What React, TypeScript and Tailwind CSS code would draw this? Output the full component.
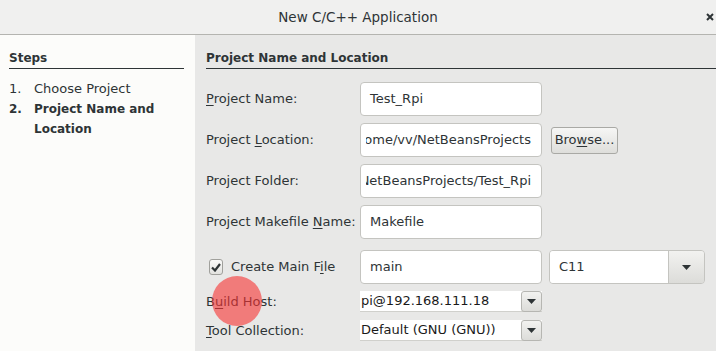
import React from "react";

const font = { fontFamily: "'DejaVu Sans', 'Liberation Sans', sans-serif" };

function U({ children }: { children: React.ReactNode }) {
  return <span className="underline underline-offset-2 decoration-1">{children}</span>;
}

function Caret() {
  return (
    <svg width="9" height="5" viewBox="0 0 9 5">
      <path d="M0 0 L9 0 L4.5 5 Z" fill="#2e3436" />
    </svg>
  );
}

function TextField({ value, right }: { value: string; right?: boolean }) {
  return (
    <div className="w-[182px] h-[34px] bg-white border border-[#c4c4c0] rounded-[4px] flex items-center overflow-hidden whitespace-nowrap text-[13px] text-[#2e3436]">
      {right ? (
        <div className="ml-[5px] mr-[10px] flex-1 flex justify-end overflow-hidden">{value}</div>
      ) : (
        <div className="pl-[9px]">{value}</div>
      )}
    </div>
  );
}

function SmallCombo({ value }: { value: string }) {
  return (
    <div className="w-[182px] h-[21px] flex bg-white border-b border-[#d0d0cc] text-[13px] text-[#1a1a1a]">
      <div className="flex-1 flex items-center pl-[1px] overflow-hidden whitespace-nowrap">{value}</div>
      <div className="w-[21px] h-[21px] flex items-center justify-center border border-[#b6b6b2] rounded-[3px] bg-gradient-to-b from-[#f2f2f0] to-[#dcdcd9]">
        <Caret />
      </div>
    </div>
  );
}

function Row({ label, children }: { label: React.ReactNode; children: React.ReactNode }) {
  return (
    <div className="flex items-center">
      <div className="w-[154px] text-[13px] text-[#2e3436] whitespace-nowrap">{label}</div>
      {children}
    </div>
  );
}

export default function App() {
  return (
    <div className="w-[716px] h-[351px] overflow-hidden flex flex-col bg-[#e8e8e7] relative" style={font}>
      {/* title bar */}
      <div className="h-[35px] shrink-0 bg-[#f0f0ef] border-b border-[#b4b4b0] flex items-center justify-center relative">
        <span className="text-[13.5px] text-[#2e3436]">New C/C++ Application</span>
        <svg className="absolute right-[2px] top-[13px]" width="8" height="8" viewBox="0 0 8 8">
          <path d="M1 1 L7 7 M7 1 L1 7" stroke="#2e3436" strokeWidth="2" />
        </svg>
      </div>

      <div className="flex flex-1 min-h-0">
        {/* steps */}
        <div className="w-[195px] shrink-0 bg-[#fcfcfa] px-[9px] pr-[11px]">
          <div className="pt-[15px] pb-[1px] border-b border-[#2e3436] text-[12px] font-bold leading-[17px] text-[#2e3436]">
            Steps
          </div>
          <div className="mt-[10px] text-[13px] leading-[20px] text-[#2e3436]">
            <div className="flex">
              <span className="w-[25px]">1.</span>
              <span>Choose Project</span>
            </div>
            <div className="flex font-bold text-[12px]">
              <span className="w-[25px] shrink-0">2.</span>
              <span>
                Project Name and
                <br />
                Location
              </span>
            </div>
          </div>
        </div>

        {/* form */}
        <div className="flex-1 pl-[11px]">
          <div className="pt-[15px] pb-[1px] border-b border-[#2e3436] text-[12px] font-bold leading-[17px] text-[#2e3436]">
            Project Name and Location
          </div>

          <div className="mt-[13px] flex flex-col gap-[7px]">
            <Row label={<><U>P</U>roject Name:</>}>
              <TextField value="Test_Rpi" />
            </Row>
            <Row label={<>Project <U>L</U>ocation:</>}>
              <TextField value="/home/vv/NetBeansProjects" right />
              <button className="ml-[9px] w-[67px] h-[27px] border border-[#a9a9a5] rounded-[3px] bg-gradient-to-b from-[#f6f6f5] to-[#dededb] text-[13px] text-[#2e3436] flex items-center justify-center">
                Bro<U>w</U>se...
              </button>
            </Row>
            <Row label="Project Folder:">
              <TextField value="/home/vv/NetBeansProjects/Test_Rpi" right />
            </Row>
            <Row label={<>Project Makefile <U>N</U>ame:</>}>
              <TextField value="Makefile" />
            </Row>
          </div>

          <div className="mt-[11px] flex items-center">
            <div className="w-[154px] flex items-center pl-[3px] text-[13px] text-[#2e3436]">
              <div className="w-[14px] h-[16px] border border-[#a0a09c] rounded-[3px] bg-gradient-to-b from-[#fafaf9] to-[#e2e2df] flex items-center justify-center">
                <svg width="10" height="9" viewBox="0 0 10 9">
                  <path d="M1 4.5 L4 7.5 L9 1" stroke="#2e3436" strokeWidth="2.2" fill="none" />
                </svg>
              </div>
              <span className="ml-[8px]">
                Create Main F<U>i</U>le
              </span>
            </div>
            <TextField value="main" />
            <div className="ml-[7px] w-[156px] h-[34px] flex border border-[#c4c4c0] rounded-[4px] overflow-hidden">
              <div className="flex-1 bg-white flex items-center pl-[9px] text-[13px] text-[#2e3436]">C11</div>
              <div className="w-[36px] border-l border-[#c4c4c0] bg-gradient-to-b from-[#f2f2f0] to-[#dcdcd9] flex items-center justify-center">
                <Caret />
              </div>
            </div>
          </div>

          <div className="mt-[7px] flex flex-col gap-[8px]">
            <Row label={<>B<U>u</U>ild Host:</>}>
              <SmallCombo value="pi@192.168.111.18" />
            </Row>
            <Row label={<><U>T</U>ool Collection:</>}>
              <SmallCombo value="Default (GNU (GNU))" />
            </Row>
          </div>
        </div>
      </div>

      {/* click indicator */}
      <div className="absolute left-[212px] top-[276px] w-[50px] h-[50px] rounded-full bg-[rgba(247,50,50,0.6)]" />
    </div>
  );
}
